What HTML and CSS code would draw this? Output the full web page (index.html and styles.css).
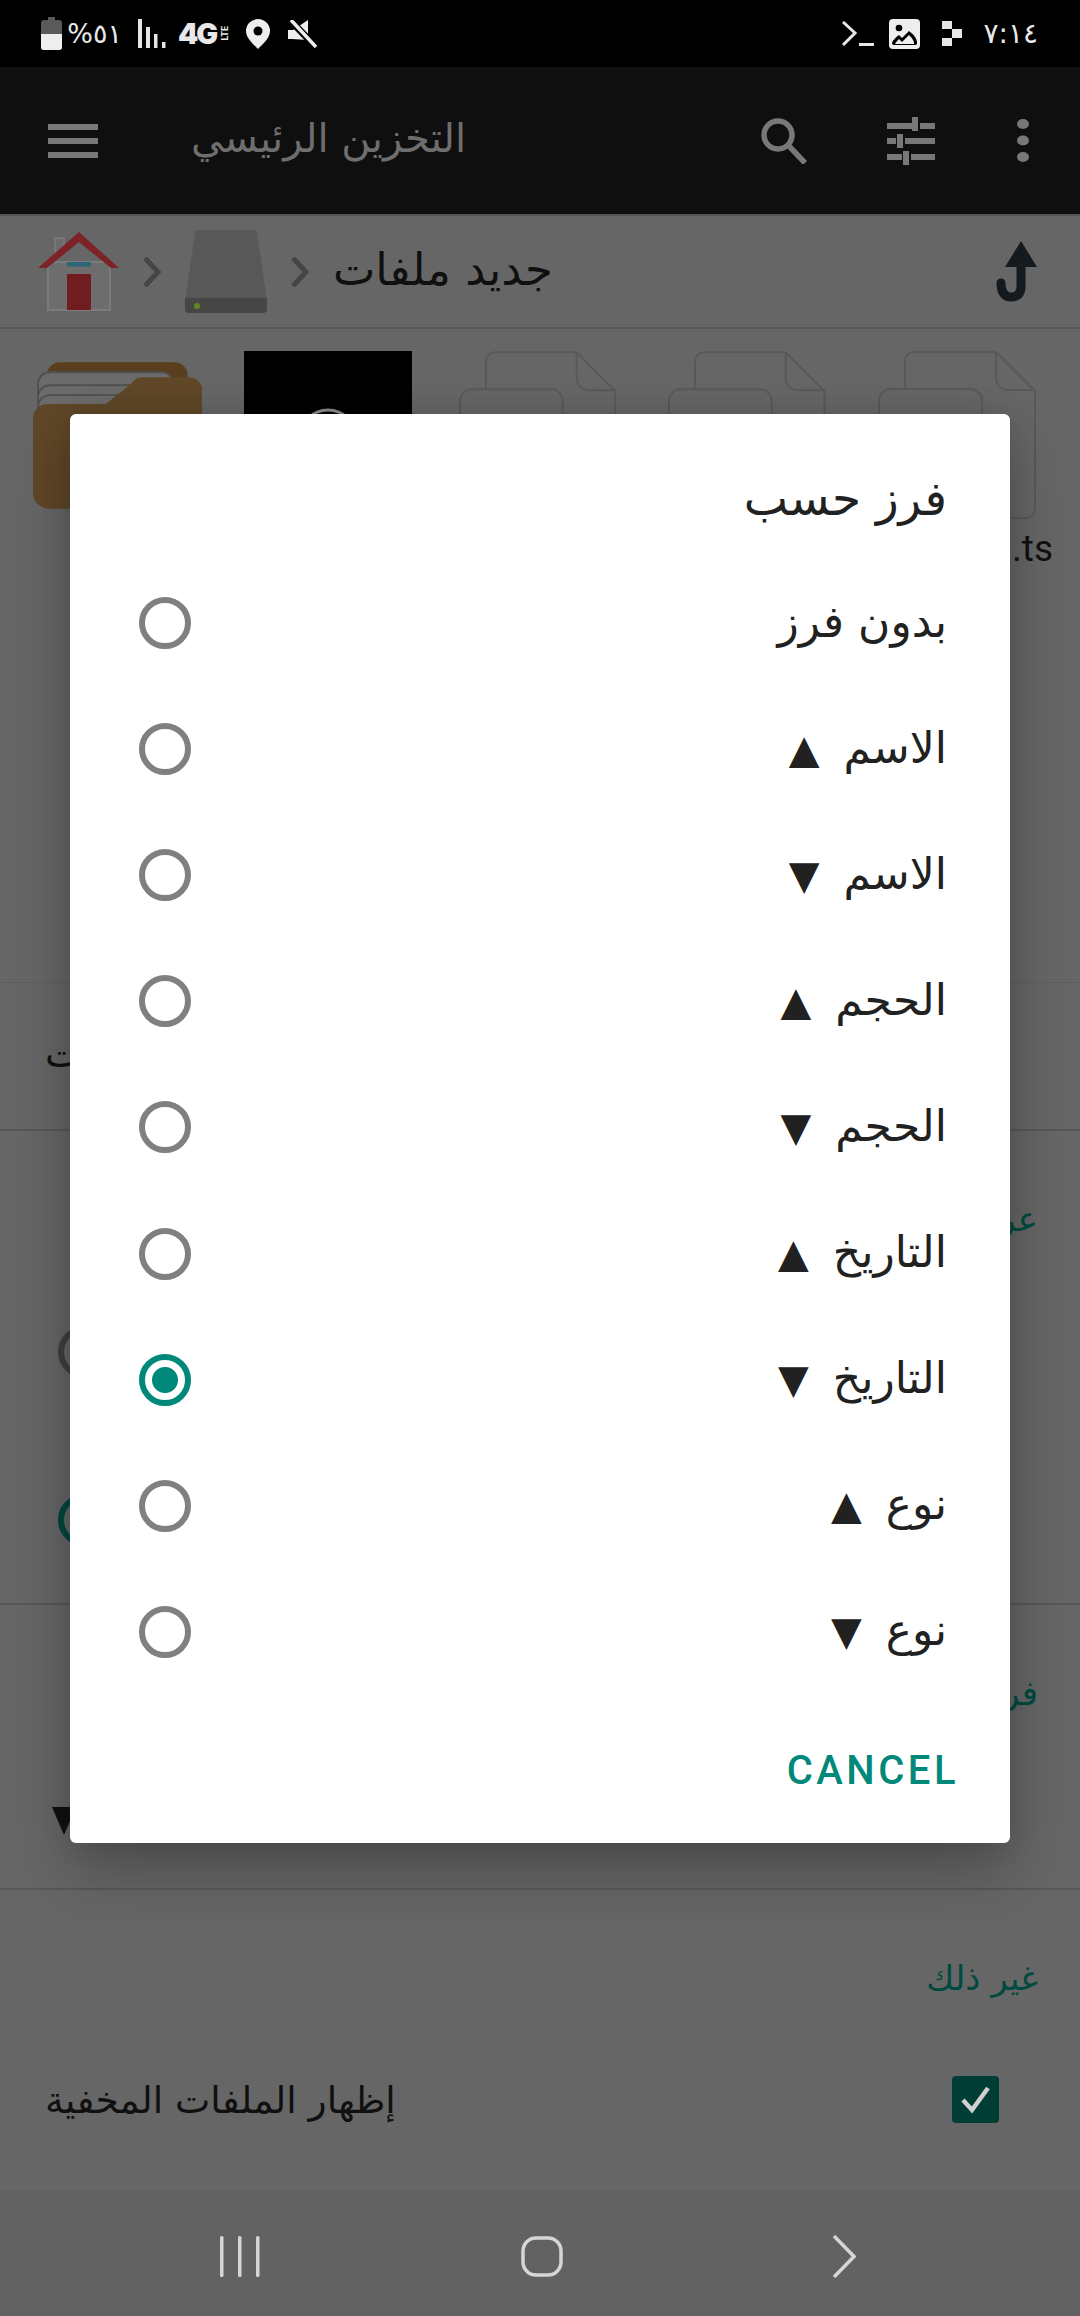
FILE: index.html
```html
<!DOCTYPE html>
<html lang="ar">

<head>
    <meta charset="utf-8">
    <title>فرز حسب</title>
    <link rel="stylesheet" href="styles.css">
</head>

<body>
    <div class="screen">
        <!-- status bar -->
        <div class="statusBar">
            <div class="statusLeft">
                <svg class="battery" width="21" height="33" viewBox="0 0 21 33">
                    <path d="M7 0h7v3h4a3 3 0 0 1 3 3v24a3 3 0 0 1-3 3H3a3 3 0 0 1-3-3V6a3 3 0 0 1 3-3h4z" fill="#5a5a5a" />
                    <path d="M0 17h21v13a3 3 0 0 1-3 3H3a3 3 0 0 1-3-3z" fill="#eee" />
                </svg>
                <span class="statusPercent" dir="rtl">٥١%</span>
                <svg class="signal" width="28" height="29" viewBox="0 0 28 29" fill="#e4e4e4">
                    <rect x="0" y="0" width="4" height="29" />
                    <rect x="8" y="8" width="4" height="21" />
                    <rect x="16" y="15" width="3.500" height="14" />
                    <rect x="24" y="23" width="3.500" height="6" />
                </svg>
                <span class="netType">4G</span>
                <span class="netLte">LTE</span>
                <svg class="pin" width="24" height="30" viewBox="0 0 24 30">
                    <path d="M12 0a12 12 0 0 1 12 12c0 7-7 13-12 18C7 25 0 19 0 12A12 12 0 0 1 12 0z" fill="#eee" />
                    <circle cx="12" cy="12" r="4.500" fill="#000" />
                </svg>
                <svg class="mute" width="29" height="28" viewBox="0 0 29 28">
                    <path d="M0 10h5L20 0v20L4 19H0z" fill="#eee" />
                    <path d="M2 0l26 27" stroke="#000" stroke-width="7" />
                    <path d="M3 0l25 27" stroke="#eee" stroke-width="3.500" />
                </svg>
            </div>
            <div class="statusRight">
                <svg class="terminal" width="32" height="25" viewBox="0 0 32 25" fill="none" stroke="#e6e6e6">
                    <path d="M1 1l12 11L1 24" stroke-width="3" />
                    <path d="M17 23.500h15" stroke-width="3" />
                </svg>
                <svg class="picture" width="31" height="30" viewBox="0 0 31 30">
                    <rect width="31" height="30" rx="4" fill="#eee" />
                    <circle cx="10" cy="9" r="3.300" fill="#000" />
                    <path d="M3 25c0-3 4-7 7-9l3 3 7-7c3 2 8 7 8 11v2a3 3 0 0 1-3 1H6a3 3 0 0 1-3-1z" fill="#000" />
                    <path d="M6 25c1-2 3-4 4-5l3 3 7-7c2 2 5 5 5 8v1z" fill="#eee" />
                </svg>
                <svg class="flip" width="20" height="25" viewBox="0 0 20 25" fill="#e6e6e6">
                    <rect x="0" y="0" width="10" height="8" />
                    <rect x="10" y="8" width="10" height="9" />
                    <rect x="0" y="17" width="10" height="8" />
                </svg>
                <span class="statusTime">٧:١٤</span>
            </div>
        </div>

        <!-- toolbar -->
        <div class="toolbar">
            <svg class="menuIcon" width="50" height="34" viewBox="0 0 50 34" fill="#787878">
                <rect y="0" width="50" height="6" />
                <rect y="14" width="50" height="6" />
                <rect y="28" width="50" height="6" />
            </svg>
            <div class="toolbarTitle" dir="rtl">التخزين الرئيسي</div>
            <svg class="searchIcon" width="46" height="46" viewBox="0 0 46 46" fill="none" stroke="#787878">
                <circle cx="17" cy="17" r="14" stroke-width="5.500" />
                <path d="M27 27l17 18" stroke-width="5.500" />
            </svg>
            <svg class="tuneIcon" width="48" height="48" viewBox="0 0 48 48" fill="#787878">
                <rect x="0" y="6" width="25" height="6" />
                <rect x="33" y="6" width="15" height="6" />
                <rect x="25" y="0" width="6" height="14" />
                <rect x="0" y="21" width="9" height="6" />
                <rect x="18" y="21" width="30" height="6" />
                <rect x="10" y="17" width="6" height="14" />
                <rect x="0" y="37" width="15" height="6" />
                <rect x="24" y="37" width="24" height="6" />
                <rect x="16" y="34" width="6" height="14" />
            </svg>
            <svg class="moreIcon" width="12" height="43" viewBox="0 0 12 43" fill="#787878">
                <ellipse cx="6" cy="5" rx="6" ry="5" />
                <ellipse cx="6" cy="21.500" rx="6" ry="5" />
                <ellipse cx="6" cy="38" rx="6" ry="5" />
            </svg>
        </div>

        <!-- breadcrumb -->
        <div class="crumbs">
            <svg class="homeIcon" width="81" height="79" viewBox="0 0 81 79">
                <rect x="17" y="6" width="9" height="14" fill="#6c6c6c" stroke="#7c7c7c" stroke-width="1.500" />
                <rect x="10" y="30" width="62" height="48" fill="#6d6d6d" stroke="#7c7c7c" stroke-width="2" />
                <rect x="29" y="42" width="24" height="36" fill="#701d1f" />
                <rect x="29" y="30" width="24" height="4.500" fill="#2c6677" />
                <path d="M41 0L81 36H73L41 10 9 36H0z" fill="#7d2226" />
            </svg>
            <svg class="crumbArrow" width="18" height="30" viewBox="0 0 18 30" fill="none" stroke="#454545" stroke-width="5">
                <path d="M2 1l13 14L2 29" />
            </svg>
            <svg class="driveIcon" width="82" height="83" viewBox="0 0 82 83">
                <path d="M10 3a3 3 0 0 1 3-3h56a3 3 0 0 1 3 3l10 68H0z" fill="#585858" />
                <path d="M0 68h82v11a4 4 0 0 1-4 4H4a4 4 0 0 1-4-4z" fill="#464646" />
                <circle cx="12" cy="76" r="3" fill="#5b8a1f" />
            </svg>
            <svg class="crumbArrow" width="18" height="30" viewBox="0 0 18 30" fill="none" stroke="#454545" stroke-width="5">
                <path d="M2 1l13 14L2 29" />
            </svg>
            <div class="crumbText" dir="rtl">جديد ملفات</div>
            <svg class="upIcon" width="42" height="61" viewBox="0 0 42 61" fill="none">
                <path d="M25 0l16 26H9z" fill="#141a1e" />
                <path d="M25 20v26c0 7-4 10-10 10S5 52 5 42" stroke="#141a1e" stroke-width="9" stroke-linecap="round" />
            </svg>
        </div>

        <!-- files, mostly behind the dialog -->
        <div class="fileGrid">
            <svg class="folderIcon" width="170" height="147" viewBox="0 0 170 147">
                <path d="M14 14a13 13 0 0 1 13-14h114a13 13 0 0 1 14 14v40H14z" fill="#5a3f1e" />
                <path d="M5 22a12 12 0 0 1 12-12h112a12 12 0 0 1 12 12v50H5z" fill="#6b6b6b" stroke="#505050" stroke-width="2" />
                <path d="M5 34a12 12 0 0 1 12-11h112M5 44a12 12 0 0 1 12-11h100" fill="none" stroke="#505050" stroke-width="2" />
                <path d="M0 56a14 14 0 0 1 14-14h59l25-20a14 14 0 0 1 12-7h46a14 14 0 0 1 14 14v102a16 16 0 0 1-16 16H16a16 16 0 0 1-16-16z" fill="#5f4727" />
            </svg>
            <div class="thumb">
                <svg width="60" height="60" viewBox="0 0 60 60" fill="none" stroke="#8a8a8a" stroke-width="3">
                    <circle cx="30" cy="30" r="28" />
                </svg>
            </div>
            <svg class="fileIcon" width="158" height="168" viewBox="0 0 158 168" fill="none" stroke="#595959" stroke-width="2">
                <path d="M27 37V10a9 9 0 0 1 9-9h82l39 39v118a9 9 0 0 1-9 9h-60" />
                <path d="M118 1v26a12 12 0 0 0 12 12h27" />
                <path d="M1 167V50a12 12 0 0 1 12-12h79a12 12 0 0 1 12 12v117" />
            </svg>
            <svg class="fileIcon" width="158" height="168" viewBox="0 0 158 168" fill="none" stroke="#595959" stroke-width="2">
                <path d="M27 37V10a9 9 0 0 1 9-9h82l39 39v118a9 9 0 0 1-9 9h-60" />
                <path d="M118 1v26a12 12 0 0 0 12 12h27" />
                <path d="M1 167V50a12 12 0 0 1 12-12h79a12 12 0 0 1 12 12v117" />
            </svg>
            <div class="fileLast">
                <svg class="fileIcon" width="158" height="168" viewBox="0 0 158 168" fill="none" stroke="#595959" stroke-width="2">
                    <path d="M27 37V10a9 9 0 0 1 9-9h82l39 39v118a9 9 0 0 1-9 9h-60" />
                    <path d="M118 1v26a12 12 0 0 0 12 12h27" />
                    <path d="M1 167V50a12 12 0 0 1 12-12h79a12 12 0 0 1 12 12v117" />
                </svg>
                <div class="fileName">.ts</div>
            </div>
        </div>

        <!-- settings sheet behind the dialog -->
        <div class="sheet" dir="rtl">
            <div class="sheetTabs"><span>ت</span></div>
            <div class="sheetView">
                <div class="sheetLabel">عرض</div>
                <div class="sheetRadio"><i class="ghostRadio"></i></div>
                <div class="sheetRadio"><i class="ghostRadio ghostOn"></i></div>
            </div>
            <div class="sheetSort">
                <div class="sheetLabel">فرز</div>
                <div class="sheetPick"><span class="sheetArrow"></span></div>
            </div>
            <div class="sheetOther">
                <div class="sheetLabel">غير ذلك</div>
                <div class="sheetCheck">
                    <svg width="47" height="47" viewBox="0 0 47 47">
                        <rect width="47" height="47" rx="4" fill="#003d35" />
                        <path d="M11 24l9 10 16-22" fill="none" stroke="#d0d0d0" stroke-width="4.500" />
                    </svg>
                    <span>إظهار الملفات المخفية</span>
                </div>
            </div>
        </div>

        <!-- nav bar -->
        <div class="navBar">
            <svg width="40" height="41" viewBox="0 0 40 41" fill="#d6d6d6">
                <rect x="0" y="0" width="3.500" height="41" rx="1.500" />
                <rect x="18" y="0" width="3.500" height="41" rx="1.500" />
                <rect x="36" y="0" width="3.500" height="41" rx="1.500" />
            </svg>
            <svg class="navHome" width="42" height="41" viewBox="0 0 42 41" fill="none" stroke="#d6d6d6" stroke-width="3.500">
                <rect x="2" y="2" width="38" height="37" rx="13" />
            </svg>
            <svg width="24" height="43" viewBox="0 0 24 43" fill="none" stroke="#d6d6d6" stroke-width="3.500">
                <path d="M2 1l20 20.500L2 42" />
            </svg>
        </div>

        <!-- sort dialog -->
        <div class="dialog" dir="rtl">
            <div class="dialogTitle">فرز حسب</div>
            <div class="option"><span>بدون فرز</span><i class="radio"></i></div>
            <div class="option"><span>الاسم<b class="sortArrow">▲</b></span><i class="radio"></i></div>
            <div class="option"><span>الاسم<b class="sortArrow">▼</b></span><i class="radio"></i></div>
            <div class="option"><span>الحجم<b class="sortArrow">▲</b></span><i class="radio"></i></div>
            <div class="option"><span>الحجم<b class="sortArrow">▼</b></span><i class="radio"></i></div>
            <div class="option"><span>التاريخ<b class="sortArrow">▲</b></span><i class="radio"></i></div>
            <div class="option"><span>التاريخ<b class="sortArrow">▼</b></span><i class="radio radioOn"></i></div>
            <div class="option"><span>نوع<b class="sortArrow">▲</b></span><i class="radio"></i></div>
            <div class="option"><span>نوع<b class="sortArrow">▼</b></span><i class="radio"></i></div>
            <div class="dialogFooter"><span class="cancelBtn" dir="ltr">CANCEL</span></div>
        </div>
    </div>
</body>

</html>
```

FILE: styles.css
```css
html,
body {
    margin: 0;
    padding: 0;
    background: #666;
}

.screen {
    position: relative;
    width: 1080px;
    height: 2316px;
    overflow: hidden;
    display: flex;
    flex-direction: column;
    font-family: "DejaVu Sans", sans-serif;
    color: #101010;
}

/* status bar */
.statusBar {
    height: 67px;
    background: #000;
    display: flex;
    justify-content: space-between;
    align-items: center;
    padding: 0 42px 0 41px;
    color: #e8e8e8;
}

.statusLeft,
.statusRight {
    display: flex;
    align-items: center;
}

.statusPercent {
    width: 54px;
    margin-left: 6px;
    font-size: 27px;
    white-space: nowrap;
}

.signal {
    margin-left: 16px;
}

.netType {
    margin-left: 12px;
    width: 42px;
    font: 900 29px Inter, sans-serif;
    letter-spacing: -2px;
}

.netLte {
    writing-mode: vertical-rl;
    transform: rotate(180deg);
    width: 9px;
    font: 700 9px Roboto, sans-serif;
}

.pin {
    margin-left: 17px;
}

.mute {
    margin-left: 18px;
}

.picture {
    margin-left: 15px;
}

.flip {
    margin-left: 22px;
}

.statusTime {
    margin-left: 21px;
    font-size: 28px;
    white-space: nowrap;
}

/* toolbar */
.toolbar {
    height: 147px;
    background: #0f0f0f;
    display: flex;
    align-items: center;
    padding: 0 51px 0 48px;
    color: #6e6e6e;
}

.toolbarTitle {
    flex: 1;
    margin: -6px 0 0 93px;
    font-size: 40px;
    text-align: left;
    white-space: nowrap;
}

.tuneIcon {
    margin-left: 80px;
}

.moreIcon {
    margin-left: 82px;
}

/* breadcrumb */
.crumbs {
    height: 115px;
    box-sizing: border-box;
    border-top: 2px solid #555;
    border-bottom: 2px solid #585858;
    display: flex;
    align-items: center;
    padding: 0 42px 0 38px;
}

.crumbs .crumbArrow {
    margin-left: 24px;
}

.driveIcon {
    margin-left: 24px;
}

.crumbText {
    flex: 1;
    margin: -4px 0 0 24px;
    font-size: 45px;
    text-align: left;
    white-space: nowrap;
}

/* files */
.fileGrid {
    height: 653px;
    box-sizing: border-box;
    display: flex;
    align-items: flex-start;
    padding: 22px 44px 0 33px;
}

.folderIcon {
    margin-top: 11px;
}

.thumb {
    width: 168px;
    height: 168px;
    margin-left: 42px;
    background: #000;
    display: flex;
    justify-content: center;
    padding-top: 57px;
    box-sizing: border-box;
}

.fileIcon {
    display: block;
}

.thumb + .fileIcon {
    margin-left: 47px;
}

.fileIcon + .fileIcon {
    margin-left: 52px;
}

.fileLast {
    margin-left: 52px;
    width: 158px;
}

.fileName {
    margin: 8px -17px 0 0;
    font: 37px Roboto, sans-serif;
    text-align: right;
    white-space: nowrap;
}

/* sheet behind the dialog */
.sheet {
    flex: 1;
    display: flex;
    flex-direction: column;
    background: #666;
}

.sheetTabs {
    height: 149px;
    box-sizing: border-box;
    border-top: 1px solid #5e5e5e;
    border-bottom: 2px solid #585858;
    padding: 0 42px 4px 45px;
    display: flex;
    align-items: center;
    justify-content: flex-end;
    font-size: 38px;
}

.sheetView {
    height: 474px;
    box-sizing: border-box;
    border-bottom: 2px solid #585858;
    padding: 60px 42px 0 0;
}

.sheetLabel {
    height: 56px;
    line-height: 56px;
    font-size: 34px;
    color: #004a40;
}

.sheetRadio {
    height: 168px;
    display: flex;
    align-items: center;
    justify-content: flex-end;
    position: relative;
    top: 21px;
}

.ghostRadio {
    width: 52px;
    height: 52px;
    box-sizing: border-box;
    border: 6px solid #404040;
    border-radius: 50%;
    margin-left: 58px;
}

.ghostOn {
    border-color: #00483f;
}

.sheetSort {
    height: 285px;
    box-sizing: border-box;
    border-bottom: 2px solid #585858;
    padding: 60px 42px 0 0;
}

.sheetPick {
    height: 120px;
    margin-top: 40px;
    display: flex;
    align-items: center;
    justify-content: flex-end;
}

.sheetArrow {
    width: 0;
    height: 0;
    margin-left: 52px;
    border-left: 12px solid transparent;
    border-right: 12px solid transparent;
    border-top: 28px solid #111;
}

.sheetOther {
    flex: 1;
    box-sizing: border-box;
    padding: 60px 42px 0 45px;
}

.sheetCheck {
    margin-top: 70px;
    display: flex;
    align-items: center;
    justify-content: space-between;
    padding-right: 39px;
    font-size: 37.500px;
}

/* nav bar */
.navBar {
    height: 126px;
    box-sizing: border-box;
    background: #626262;
    display: flex;
    justify-content: space-between;
    align-items: center;
    padding: 6px 224px 0 220px;
}

.navHome {
    margin-right: 8px;
}

/* dialog */
.dialog {
    position: absolute;
    left: 70px;
    top: 414px;
    width: 940px;
    height: 1429px;
    box-sizing: border-box;
    background: #fff;
    border-radius: 6px;
    box-shadow: 0 30px 60px rgba(0, 0, 0, 0.24), 0 0 30px rgba(0, 0, 0, 0.12);
    padding: 0 63px 0 69px;
    color: #212121;
}

.dialogTitle {
    height: 146px;
    box-sizing: border-box;
    padding-top: 54px;
    font-size: 47px;
    line-height: 62px;
}

.option {
    height: 126.100px;
    display: flex;
    align-items: center;
    justify-content: space-between;
    font-size: 44px;
}

.option span {
    margin-top: -4px;
}

.sortArrow {
    margin-right: 24px;
    font-size: 40px;
    font-weight: normal;
}

.radio {
    width: 52px;
    height: 52px;
    box-sizing: border-box;
    border: 6px solid #808080;
    border-radius: 50%;
}

.radioOn {
    border-color: #00897b;
    background: radial-gradient(circle, #00897b 0 12.500px, transparent 13.500px);
}

.dialogFooter {
    height: 148px;
    display: flex;
    justify-content: flex-start;
    align-items: center;
    margin-right: -12px;
    padding-top: 4px;
    box-sizing: border-box;
}

.cancelBtn {
    font: 500 40px Roboto, sans-serif;
    letter-spacing: 3.500px;
    color: #00897b;
}
```
